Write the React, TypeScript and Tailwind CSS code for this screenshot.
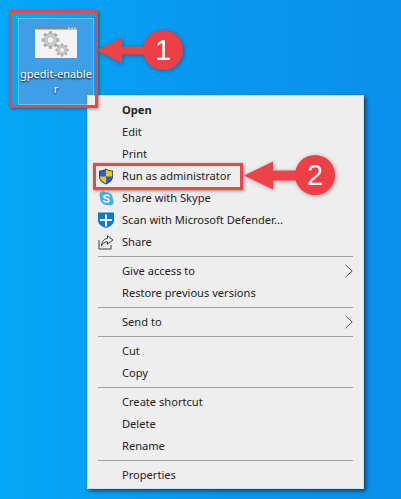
import React from "react";

const font = { fontFamily: '"Noto Sans", "Open Sans", sans-serif' };

function Gear({ cx, cy, r }: { cx: number; cy: number; r: number }) {
  const teeth = Array.from({ length: 8 }, (_, i) => i * 45);
  return (
    <g>
      {teeth.map((a) => (
        <rect key={a} x={cx - r * 0.2} y={cy - r * 1.1} width={r * 0.4} height={r * 0.5} fill="#a9a9a9" transform={`rotate(${a} ${cx} ${cy})`} />
      ))}
      <circle cx={cx} cy={cy} r={r * 0.8} fill="#cdcdcd" stroke="#a3a3a3" strokeWidth="0.6" />
      <circle cx={cx} cy={cy} r={r * 0.42} fill="#f4f4f4" stroke="#a3a3a3" strokeWidth="0.6" />
    </g>
  );
}

function FileIcon() {
  return (
    <svg width="42" height="31" viewBox="0 0 42 31" className="shrink-0">
      <rect x="0" y="0" width="42" height="31" fill="#f3f3f3" />
      <rect x="0" y="0" width="42" height="2.5" fill="#85888c" />
      <rect x="33" y="0.7" width="2" height="1.1" fill="#dddddd" />
      <rect x="36" y="0.7" width="2" height="1.1" fill="#dddddd" />
      <rect x="39" y="0.7" width="2" height="1.1" fill="#dddddd" />
      <Gear cx={15.5} cy={13} r={8} />
      <Gear cx={27} cy={23} r={6} />
    </svg>
  );
}

function Shield() {
  return (
    <svg width="16" height="17" viewBox="0 0 16 17">
      <path d="M8 0.5 C6 2 3.5 2.6 1 2.6 V8.5 C1 12 4 15 8 16.5 C12 15 15 12 15 8.5 V2.6 C12.5 2.6 10 2 8 0.5Z" fill="#1d3f8f" />
      <path d="M8 1.5 V8.5 H1.8 V3.4 C4 3.3 6.2 2.8 8 1.5Z" fill="#2d62c4" />
      <path d="M8 8.5 H14.2 C14 11.6 11.5 14.2 8 15.5Z" fill="#2d62c4" />
      <path d="M8 1.5 C9.8 2.8 12 3.3 14.2 3.4 V8.5 H8Z" fill="#f5c518" />
      <path d="M8 8.5 V15.5 C4.5 14.2 2 11.6 1.8 8.5Z" fill="#f5c518" />
    </svg>
  );
}

function Skype() {
  return (
    <svg width="15" height="15" viewBox="0 0 16 16">
      <circle cx="4.5" cy="4.5" r="4" fill="#45b0e4" />
      <circle cx="11.5" cy="11.5" r="4" fill="#45b0e4" />
      <circle cx="8" cy="8" r="6.8" fill="#45b0e4" />
      <path d="M11 5.6 C10.3 4.2 5.4 3.8 5.3 6.2 C5.2 8.4 10.8 7.6 10.8 10 C10.8 12.2 6 12.2 4.9 10.2" fill="none" stroke="#fff" strokeWidth="1.5" strokeLinecap="round" />
    </svg>
  );
}

function Defender() {
  return (
    <svg width="16" height="16" viewBox="0 0 16 16">
      <path d="M0 0.5 H16 V8.5 C16 12 12.5 14.5 8 16 C3.5 14.5 0 12 0 8.5Z" fill="#0f78d4" />
      <rect x="7" y="2.5" width="2" height="12" fill="#fff" />
      <rect x="2" y="7" width="12" height="2" fill="#fff" />
    </svg>
  );
}

function ShareIcon() {
  return (
    <svg width="16" height="15" viewBox="0 0 16 15" fill="none" stroke="#3c3c3c" strokeWidth="1">
      <path d="M1 5 V14 H13 V10" />
      <path d="M9.5 0.8 L15 5 L9.5 9.2 V6.8 C7 6.7 5 7.8 3.5 10.7 C3.8 6.7 6 3.8 9.5 3.4Z" strokeLinejoin="round" />
    </svg>
  );
}

function Chevron() {
  return (
    <svg width="8" height="14" viewBox="0 0 8 14" fill="none" stroke="#555" strokeWidth="1">
      <path d="M0.5 0.8 L7.2 7 L0.5 13.2" />
    </svg>
  );
}

function Item({ label, bold, icon, sub }: { label: string; bold?: boolean; icon?: React.ReactNode; sub?: boolean }) {
  return (
    <div className="flex h-[22px] items-center">
      <div className="flex w-[34px] shrink-0 items-center justify-center pl-[2px]">{icon}</div>
      <span className={`flex-1 whitespace-nowrap text-[11.1px] leading-none text-[#222222] ${bold ? "font-bold" : ""}`}>{label}</span>
      {sub && <div className="mr-[10px] flex items-center"><Chevron /></div>}
    </div>
  );
}

function Sep() {
  return <div className="mx-[10px] my-[3px] h-px bg-[#a0a0a0]" />;
}

function Arrow1() {
  return (
    <svg width="50" height="27" viewBox="0 0 50 27" className="block">
      <path d="M0 13.5 L25 0.5 V9.5 H50 V17.5 H25 V26.5 Z" fill="#ee4249" />
    </svg>
  );
}

function Arrow2() {
  return (
    <svg width="55" height="29" viewBox="0 0 55 29" className="block">
      <path d="M0 14.5 L29 0.5 V9.5 H55 V19.5 H29 V28.5 Z" fill="#ee4249" />
    </svg>
  );
}

function Badge({ n }: { n: string }) {
  return (
    <div style={{ fontFamily: '"Liberation Sans", sans-serif' }} className="flex h-10 w-10 items-center justify-center rounded-full bg-[#ee3f46] text-[29px] leading-none text-white">{n}</div>
  );
}

export default function App() {
  return (
    <div style={font} className="relative h-[499px] w-[401px] overflow-hidden bg-gradient-to-r from-[#05a8f6] via-[#0998ee] to-[#0a90e8]">
      {/* selected desktop icon */}
      <div className="absolute left-[18px] top-[18px] flex h-[87px] w-[76px] flex-col items-center border border-[#74bdf0] bg-[#3f9fe6] pt-[8px]">
        <FileIcon />
        <div className="mt-[8px] w-full whitespace-nowrap text-center text-[11px] leading-[15px] text-white [text-shadow:0_1px_2px_#000]">gpedit-enable<br />r</div>
      </div>

      {/* context menu */}
      <div className="absolute left-[87px] top-[95px] w-[277px] border border-[#dcdcdc] bg-[#eeeeee] pt-[3px] pb-[2px] shadow-[2px_2px_4px_rgba(0,0,0,0.55)]">
        <Item label="Open" bold />
        <Item label="Edit" />
        <Item label="Print" />
        <Item label="Run as administrator" icon={<Shield />} />
        <Item label="Share with Skype" icon={<Skype />} />
        <Item label="Scan with Microsoft Defender..." icon={<Defender />} />
        <Item label="Share" icon={<ShareIcon />} />
        <Sep />
        <Item label="Give access to" sub />
        <Item label="Restore previous versions" />
        <Sep />
        <Item label="Send to" sub />
        <Sep />
        <Item label="Cut" />
        <Item label="Copy" />
        <Sep />
        <Item label="Create shortcut" />
        <Item label="Delete" />
        <Item label="Rename" />
        <Sep />
        <Item label="Properties" />
      </div>

      {/* annotation 1 */}
      <div className="absolute left-[9px] top-[10px] h-[98px] w-[89px] border-[3px] border-[#e9474d] shadow-[1px_1px_3px_rgba(0,0,0,0.4)]" />
      <div className="absolute left-[97px] top-[30px] flex items-center drop-shadow-[1px_1px_2px_rgba(0,0,0,0.35)]">
        <Arrow1 />
        <div className="-ml-[4px]"><Badge n="1" /></div>
      </div>

      {/* annotation 2 */}
      <div className="absolute left-[93px] top-[163px] h-[27px] w-[150px] border-[3px] border-[#e9474d] shadow-[1px_1px_3px_rgba(0,0,0,0.4)]" />
      <div className="absolute left-[244px] top-[155px] flex items-center drop-shadow-[1px_1px_2px_rgba(0,0,0,0.35)]">
        <Arrow2 />
        <div className="-ml-[4px]"><Badge n="2" /></div>
      </div>
    </div>
  );
}
